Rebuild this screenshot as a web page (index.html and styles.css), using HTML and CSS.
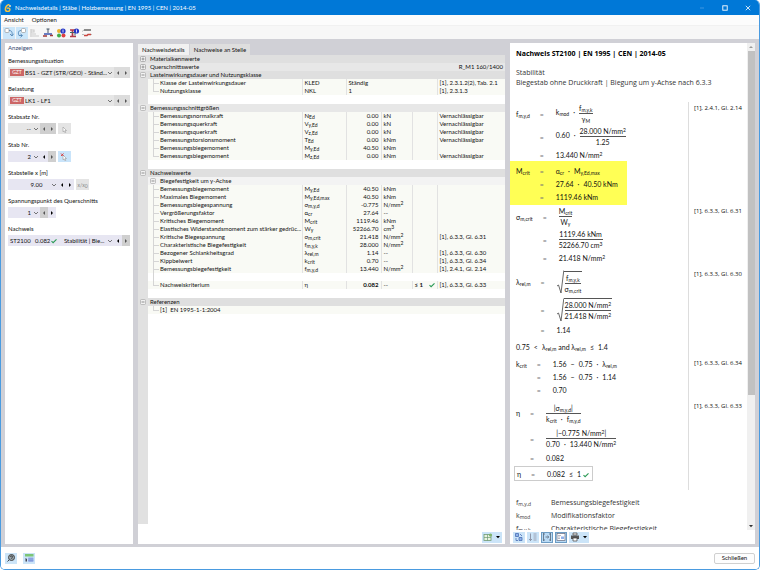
FILE: index.html
```html
<!DOCTYPE html>
<html lang="de">
<head>
	<meta charset="utf-8">
	<title>Nachweisdetails</title>
	<link rel="stylesheet" href="styles.css">
</head>
<body>

<!-- shared shapes -->
<svg class="defs" width="0" height="0">
	<symbol id="chevron" viewBox="0 0 6 6"><path d="M1 2l2 2 2-2" fill="none" stroke="#555" stroke-width=".8"/></symbol>
	<symbol id="left" viewBox="0 0 6 6"><path d="M4 1v4L2 3z"/></symbol>
	<symbol id="right" viewBox="0 0 6 6"><path d="M2 1v4l2-2z"/></symbol>
	<symbol id="down" viewBox="0 0 6 6"><path d="M1 2h4L3 4.300z"/></symbol>
	<symbol id="up" viewBox="0 0 6 6"><path d="M1 4h4L3 2z"/></symbol>
	<symbol id="check" viewBox="0 0 6 6"><path d="M.5 3.200l1.600 1.500L5.500 1.300" fill="none" stroke="#2a9a55" stroke-width="1.100"/></symbol>
	<symbol id="minus" viewBox="0 0 6 6"><rect x=".5" y=".5" width="5" height="5" rx="1" fill="#f2f2f2" stroke="#aaa" stroke-width=".7"/><path d="M1.500 3h3" stroke="#666" stroke-width=".7"/></symbol>
	<symbol id="plus" viewBox="0 0 6 6"><rect x=".5" y=".5" width="5" height="5" rx="1" fill="#f2f2f2" stroke="#999" stroke-width=".7"/><path d="M1.500 3h3M3 1.500v3" stroke="#777" stroke-width=".7"/></symbol>
	<symbol id="pick" viewBox="0 0 10 10"><path d="M4 3l3.500 3.500H6l.8 1.800-.9.400-.8-1.800L4 7.800z" fill="#fff" stroke="#999" stroke-width=".6"/></symbol>
	<symbol id="root" viewBox="0 0 7 24"><path d="M0 16l1.500-1L4 23 6.800.5" fill="none" stroke="#444" stroke-width=".8"/></symbol>
</svg>

<div class="window">
	<header class="titlebar">
		<svg class="logo" viewBox="0 0 8 8"><path d="M5.500.5C2.500 1 1 3.500 1.500 6c.4 1.800 3.500 2 4.200.4C6.500 4.500 4.500 3.200 3 4.500" fill="none" stroke="#f5c242" stroke-width="1.500"/><circle cx="6" cy="2" r="1" fill="#e8e0c0"/></svg>
		<h1>Nachweisdetails | Stäbe | Holzbemessung | EN 1995 | CEN | 2014-05</h1>
		<button class="win-btn" aria-label="Minimieren"><svg viewBox="0 0 8 8"><path d="M2 4h4" stroke="#4fa0e3" stroke-width=".8"/></svg></button>
		<button class="win-btn" aria-label="Maximieren"><svg viewBox="0 0 8 8"><rect x="1.800" y="1.800" width="4.400" height="4.400" fill="none" stroke="#fff" stroke-width=".9"/></svg></button>
		<button class="win-btn" aria-label="Fenster zu"><svg viewBox="0 0 8 8"><path d="M1.800 1.800l4.400 4.400M6.200 1.800L1.800 6.200" stroke="#fff" stroke-width=".8"/></svg></button>
	</header>

	<nav class="menubar">
		<button>Ansicht</button>
		<button>Optionen</button>
	</nav>

	<div class="toolbar">
		<button class="tool on" aria-label="Zurück"><svg viewBox="0 0 12 12"><rect x="2" y="1.500" width="4" height="4" rx="1" fill="#fff" stroke="#999" stroke-width=".7"/><path d="M6 3.500c3 0 3.500 2 3 5M7 7l2 2 1.500-2.200" fill="none" stroke="#5286b5" stroke-width=".9"/></svg></button>
		<button class="tool on" aria-label="Vor"><svg viewBox="0 0 12 12"><rect x="5.500" y="1.500" width="4" height="4" rx="1" fill="#fff" stroke="#999" stroke-width=".7"/><path d="M5 3.500c-3 0-3 3-2 5h3M4.500 7l2 1.500-2 1.800" fill="none" stroke="#5286b5" stroke-width=".9"/></svg></button>
		<button class="tool" aria-label="Liste"><svg viewBox="0 0 12 12"><path d="M2 2v8M2 3h3v2H2M3 7h4M3 9h7" fill="none" stroke="#ccc" stroke-width="1.200"/></svg></button>
		<button class="tool" aria-label="Stab"><svg viewBox="0 0 12 12"><path d="M4.500 2h3M6 2v4" stroke="#456" stroke-width="1"/><path d="M2 7h8" stroke="#3b55b0" stroke-width="1.300"/><path d="M1 9h4M8 8.500h3" fill="none" stroke="#a33a3a" stroke-width="1.400"/></svg></button>
		<button class="tool" aria-label="Ergebnisse"><svg viewBox="0 0 12 12"><circle cx="4" cy="4" r="2" fill="#e8b02e"/><circle cx="4" cy="8.500" r="2" fill="#3fae49"/><circle cx="8.500" cy="8.500" r="2" fill="#e04040"/><circle cx="8" cy="4" r="2.600" fill="#2436c8"/><path d="M8 2.500v3" stroke="#fff" stroke-width=".8"/></svg></button>
		<button class="tool" aria-label="Querschnitt"><svg viewBox="0 0 12 12"><path d="M2 3h5M4.500 3v6M2 9.500h6" stroke="#b23a48" stroke-width="1.700"/><path d="M2 5.500h5v3" fill="none" stroke="#466" stroke-width="1"/><circle cx="8.500" cy="4" r="2.600" fill="#2436c8"/><path d="M8.500 2.500v3" stroke="#fff" stroke-width=".8"/></svg></button>
		<button class="tool" aria-label="Stäbe"><svg viewBox="0 0 12 12"><path d="M3 3h7" stroke="#666" stroke-width="1.500"/><path d="M1 4.500l2-1.500M1 7.500h2M9 7.500h2" stroke="#bbb"/><path d="M3 8.500h3l1-1h3" fill="none" stroke="#c8453f" stroke-width="1.500"/></svg></button>
	</div>

	<main class="work">

		<aside class="panel side">
			<h2>Anzeigen</h2>

			<div class="field">
				<label for="situation">Bemessungssituation</label>
				<div class="control wide grey">
					<span class="pick-box"><span class="badge">GZT</span><select id="situation"><option>BS1 - GZT (STR/GEO) - Ständ...</option></select><svg><use href="#chevron"/></svg></span>
					<button class="step off" aria-label="zurück"><svg><use href="#left"/></svg></button>
					<button class="step off" aria-label="weiter"><svg><use href="#right"/></svg></button>
				</div>
			</div>

			<div class="field">
				<label for="load">Belastung</label>
				<div class="control wide grey">
					<span class="pick-box"><span class="badge">GZT</span><select id="load"><option>LK1 - LF1</option></select><svg><use href="#chevron"/></svg></span>
					<button class="step off" aria-label="zurück"><svg><use href="#left"/></svg></button>
					<button class="step off" aria-label="weiter"><svg><use href="#right"/></svg></button>
				</div>
			</div>

			<div class="field">
				<label for="set">Stabsatz Nr.</label>
				<div class="control grey">
					<span class="pick-box small"><select id="set"><option>--</option></select><svg><use href="#chevron"/></svg></span>
					<button class="step off" aria-label="zurück"><svg><use href="#left"/></svg></button>
					<button class="step off" aria-label="weiter"><svg><use href="#right"/></svg></button>
					<button class="pick" aria-label="Stabsatz wählen"><svg><use href="#pick"/></svg></button>
				</div>
			</div>

			<div class="field">
				<label for="member">Stab Nr.</label>
				<div class="control">
					<span class="pick-box small"><select id="member"><option>2</option></select><svg><use href="#chevron"/></svg></span>
					<button class="step" aria-label="zurück"><svg><use href="#left"/></svg></button>
					<button class="step off" aria-label="weiter"><svg><use href="#right"/></svg></button>
					<button class="pick on" aria-label="Stab wählen"><svg viewBox="0 0 10 10"><use href="#pick"/><path d="M2 1.500l2.500 2.500M4.500 1.500L2 4" stroke="#d33" stroke-width=".9"/></svg></button>
				</div>
			</div>

			<div class="field">
				<label for="place">Stabstelle x [m]</label>
				<div class="control">
					<span class="pick-box medium"><select id="place"><option>9.00</option></select><svg><use href="#chevron"/></svg></span>
					<button class="step" aria-label="zurück"><svg><use href="#left"/></svg></button>
					<button class="step" aria-label="weiter"><svg><use href="#right"/></svg></button>
					<button class="pick">x/x<sub>0</sub></button>
				</div>
			</div>

			<div class="field">
				<label for="point">Spannungspunkt des Querschnitts</label>
				<div class="control">
					<span class="pick-box small"><select id="point"><option>1</option></select><svg><use href="#chevron"/></svg></span>
					<button class="step off" aria-label="zurück"><svg><use href="#left"/></svg></button>
					<button class="step" aria-label="weiter"><svg><use href="#right"/></svg></button>
				</div>
			</div>

			<div class="field">
				<label for="proof">Nachweis</label>
				<div class="control wide">
					<span class="pick-box"><span class="proof-no">ST2100</span><span class="proof-val">0.082</span><svg><use href="#check"/></svg><select id="proof"><option>Stabilität | Bie...</option></select><svg><use href="#chevron"/></svg></span>
					<button class="step" aria-label="zurück"><svg><use href="#left"/></svg></button>
					<button class="step off" aria-label="weiter"><svg><use href="#right"/></svg></button>
				</div>
			</div>
		</aside>

		<section class="details">
			<div class="tabs">
				<button class="tab active">Nachweisdetails</button>
				<button class="tab">Nachweise an Stelle</button>
			</div>
			<div class="panel grid-panel">
				<div class="grid-scroll">
				<table>
					<colgroup><col class="c-tree"><col class="c-name"><col class="c-sym"><col class="c-val"><col class="c-unit"><col class="c-lim"><col class="c-ref"></colgroup>
					<tbody>
					<tr class="group"><th><svg><use href="#plus"/></svg></th><th colspan="6">Materialkennwerte</th></tr>
					<tr class="group light"><th><svg><use href="#plus"/></svg></th><th colspan="4">Querschnittswerte</th><td colspan="2" class="num">R_M1 160/1400</td></tr>
					<tr class="group"><th><svg><use href="#minus"/></svg></th><th colspan="6">Lasteinwirkungsdauer und Nutzungsklasse</th></tr>
					<tr><td></td><td>Klasse der Lasteinwirkungsdauer</td><td>KLED</td><td colspan="3">Ständig</td><td>[1], 2.3.1.2(2), Tab. 2.1</td></tr>
					<tr class="last"><td></td><td>Nutzungsklasse</td><td>NKL</td><td colspan="3">1</td><td>[1], 2.3.1.3</td></tr>
					<tr class="gap"><td></td><td colspan="6"></td></tr>

					<tr class="group light"><th><svg><use href="#minus"/></svg></th><th colspan="6">Bemessungsschnittgrößen</th></tr>
					<tr><td></td><td>Bemessungsnormalkraft</td><td>N<sub>Ed</sub></td><td class="num">0.00</td><td>kN</td><td></td><td>Vernachlässigbar</td></tr>
					<tr><td></td><td>Bemessungsquerkraft</td><td>V<sub>y,Ed</sub></td><td class="num">0.00</td><td>kN</td><td></td><td>Vernachlässigbar</td></tr>
					<tr><td></td><td>Bemessungsquerkraft</td><td>V<sub>z,Ed</sub></td><td class="num">0.00</td><td>kN</td><td></td><td>Vernachlässigbar</td></tr>
					<tr><td></td><td>Bemessungstorsionsmoment</td><td>T<sub>Ed</sub></td><td class="num">0.00</td><td>kNm</td><td></td><td>Vernachlässigbar</td></tr>
					<tr><td></td><td>Bemessungsbiegemoment</td><td>M<sub>y,Ed</sub></td><td class="num">40.50</td><td>kNm</td><td></td><td></td></tr>
					<tr class="last"><td></td><td>Bemessungsbiegemoment</td><td>M<sub>z,Ed</sub></td><td class="num">0.00</td><td>kNm</td><td></td><td>Vernachlässigbar</td></tr>
					<tr class="gap"><td></td><td colspan="6"></td></tr>

					<tr class="group"><th><svg><use href="#minus"/></svg></th><th colspan="6">Nachweiswerte</th></tr>
					<tr class="subgroup"><td></td><th colspan="6"><svg><use href="#minus"/></svg>Biegefestigkeit um y-Achse</th></tr>
					<tr><td></td><td>Bemessungsbiegemoment</td><td>M<sub>y,Ed</sub></td><td class="num">40.50</td><td>kNm</td><td></td><td></td></tr>
					<tr><td></td><td>Maximales Biegemoment</td><td>M<sub>y,Ed,max</sub></td><td class="num">40.50</td><td>kNm</td><td></td><td></td></tr>
					<tr><td></td><td>Bemessungsbiegespannung</td><td>σ<sub>m,y,d</sub></td><td class="num">-0.775</td><td>N/mm<sup>2</sup></td><td></td><td></td></tr>
					<tr><td></td><td>Vergrößerungsfaktor</td><td>α<sub>cr</sub></td><td class="num">27.64</td><td>--</td><td></td><td></td></tr>
					<tr><td></td><td>Kritisches Biegemoment</td><td>M<sub>crit</sub></td><td class="num">1119.46</td><td>kNm</td><td></td><td></td></tr>
					<tr><td></td><td>Elastisches Widerstandsmoment zum stärker gedrüc...</td><td>W<sub>y</sub></td><td class="num">52266.70</td><td>cm<sup>3</sup></td><td></td><td></td></tr>
					<tr><td></td><td>Kritische Biegespannung</td><td>σ<sub>m,crit</sub></td><td class="num">21.418</td><td>N/mm<sup>2</sup></td><td></td><td>[1], 6.3.3, Gl. 6.31</td></tr>
					<tr><td></td><td>Charakteristische Biegefestigkeit</td><td>f<sub>m,y,k</sub></td><td class="num">28.000</td><td>N/mm<sup>2</sup></td><td></td><td></td></tr>
					<tr><td></td><td>Bezogener Schlankheitsgrad</td><td>λ<sub>rel,m</sub></td><td class="num">1.14</td><td>--</td><td></td><td>[1], 6.3.3, Gl. 6.30</td></tr>
					<tr><td></td><td>Kippbeiwert</td><td>k<sub>crit</sub></td><td class="num">0.70</td><td>--</td><td></td><td>[1], 6.3.3, Gl. 6.34</td></tr>
					<tr><td></td><td>Bemessungsbiegefestigkeit</td><td>f<sub>m,y,d</sub></td><td class="num">13.440</td><td>N/mm<sup>2</sup></td><td></td><td>[1], 2.4.1, Gl. 2.14</td></tr>
					<tr class="gap line"><td></td><td colspan="6"></td></tr>
					<tr class="last"><td></td><td>Nachweiskriterium</td><td>η</td><td class="num strong">0.082</td><td>--</td><td class="limit"><b>≤ 1</b><svg><use href="#check"/></svg></td><td>[1], 6.3.3, Gl. 6.33</td></tr>
					<tr class="gap"><td></td><td colspan="6"></td></tr>

					<tr class="group"><th><svg><use href="#minus"/></svg></th><th colspan="6">Referenzen</th></tr>
					<tr class="last"><td></td><td colspan="6">[1]&nbsp; EN 1995-1-1:2004</td></tr>
					</tbody>
				</table>
				</div>
				<div class="panel-tools end">
					<button class="ptool drop" aria-label="Tabelle exportieren"><svg viewBox="0 0 10 10"><rect x="1" y="2.500" width="7" height="6" fill="#e9f3e2" stroke="#6f9a72" stroke-width=".8"/><path d="M1 5.500h7M4.500 2.500v6" stroke="#6f9a72" stroke-width=".7"/><circle cx="7.500" cy="3" r="1.600" fill="#7fb56a"/></svg><svg class="caret"><use href="#down"/></svg></button>
				</div>
			</div>
		</section>

		<section class="panel report">
			<div class="report-view">
				<div class="doc">
					<h2>Nachweis ST2100 | EN 1995 | CEN | 2014-05</h2>
					<p class="intro">Stabilität<br>Biegestab ohne Druckkraft | Biegung um y-Achse nach 6.3.3</p>

					<div class="calc">
						<div class="step-row">
							<div class="eqs fracs">
								<span>f<sub>m,y,d</sub></span><i>=</i><span class="rhs">k<sub>mod</sub><em>·</em><span class="frac"><span>f<sub>m,y,k</sub></span><span>γ<sub>M</sub></span></span></span>
								<span></span><i>=</i><span class="rhs">0.60<em>·</em><span class="frac"><span>28.000 N/mm<sup>2</sup></span><span>1.25</span></span></span>
								<span></span><i>=</i><span class="rhs">13.440 N/mm<sup>2</sup></span>
							</div>
							<div class="cite">[1], 2.4.1, Gl. 2.14</div>
						</div>

						<div class="step-row">
							<div class="mark-cell">
								<div class="eqs lines mark">
									<span>M<sub>crit</sub></span><i>=</i><span class="rhs">α<sub>cr</sub><em>·</em>M<sub>y,Ed,max</sub></span>
									<span></span><i>=</i><span class="rhs">27.64<em>·</em>40.50 kNm</span>
									<span></span><i>=</i><span class="rhs">1119.46 kNm</span>
								</div>
							</div>
							<div class="cite"></div>
						</div>

						<div class="step-row">
							<div class="eqs fracs">
								<span>σ<sub>m,crit</sub></span><i>=</i><span class="rhs"><span class="frac"><span>M<sub>crit</sub></span><span>W<sub>y</sub></span></span></span>
								<span></span><i>=</i><span class="rhs"><span class="frac"><span>1119.46 kNm</span><span>52266.70 cm<sup>3</sup></span></span></span>
								<span></span><i>=</i><span class="rhs">21.418 N/mm<sup>2</sup></span>
							</div>
							<div class="cite">[1], 6.3.3, Gl. 6.31</div>
						</div>

						<div class="step-row spaced">
							<div class="eqs roots">
								<span>λ<sub>rel,m</sub></span><i>=</i><span class="rhs"><svg class="root"><use href="#root"/></svg><span class="under"><span class="frac"><span>f<sub>m,y,k</sub></span><span>σ<sub>m,crit</sub></span></span></span></span>
								<span></span><i>=</i><span class="rhs"><svg class="root"><use href="#root"/></svg><span class="under"><span class="frac"><span>28.000 N/mm<sup>2</sup></span><span>21.418 N/mm<sup>2</sup></span></span></span></span>
								<span></span><i>=</i><span class="rhs">1.14</span>
							</div>
							<div class="cite">[1], 6.3.3, Gl. 6.30</div>
						</div>

						<div class="step-row spaced">
							<div class="eqs cond"><span>0.75<em>&lt;</em>λ<sub>rel,m</sub> and λ<sub>rel,m</sub><em>≤</em>1.4</span></div>
							<div class="cite"></div>
						</div>

						<div class="step-row spaced">
							<div class="eqs lines">
								<span>k<sub>crit</sub></span><i>=</i><span class="rhs">1.56<em>−</em>0.75<em>·</em>λ<sub>rel,m</sub></span>
								<span></span><i>=</i><span class="rhs">1.56<em>−</em>0.75<em>·</em>1.14</span>
								<span></span><i>=</i><span class="rhs">0.70</span>
							</div>
							<div class="cite">[1], 6.3.3, Gl. 6.34</div>
						</div>

						<div class="step-row spaced">
							<div class="eqs fracs tall">
								<span>η</span><i>=</i><span class="rhs"><span class="frac"><span>|σ<sub>m,y,d</sub>|</span><span>k<sub>crit</sub><em>·</em>f<sub>m,y,d</sub></span></span></span>
								<span></span><i>=</i><span class="rhs"><span class="frac"><span>|−0.775 N/mm<sup>2</sup>|</span><span>0.70<em>·</em>13.440 N/mm<sup>2</sup></span></span></span>
								<span></span><i>=</i><span class="rhs">0.082</span>
							</div>
							<div class="cite">[1], 6.3.3, Gl. 6.33</div>
						</div>

						<div class="step-row final">
							<div class="result-cell">
								<div class="eqs lines result">
									<span>η</span><i>=</i><span class="rhs">0.082<em>≤</em>1&nbsp;<svg><use href="#check"/></svg></span>
								</div>
							</div>
							<div class="cite"></div>
						</div>
					</div>

					<dl class="legend">
						<dt>f<sub>m,y,d</sub></dt><dd>Bemessungsbiegefestigkeit</dd>
						<dt>k<sub>mod</sub></dt><dd>Modifikationsfaktor</dd>
						<dt>f<sub>m,y,k</sub></dt><dd>Charakteristische Biegefestigkeit</dd>
					</dl>
				</div>
				<div class="scrollbar">
					<svg><use href="#up"/></svg>
					<div class="track"><div class="thumb"></div></div>
					<svg class="dark"><use href="#down"/></svg>
				</div>
			</div>
			<div class="panel-tools">
				<button class="ptool" aria-label="Werte"><svg viewBox="0 0 10 10"><path d="M1.500 1.500h3v3h-3zM5 5.500h3v3H5z" fill="#8fb2ea" stroke="#4a6fb5" stroke-width=".8"/><path d="M6 2l2 2M2 6v2.500h2" fill="none" stroke="#4a6fb5" stroke-width=".8"/></svg></button>
				<button class="ptool" aria-label="Abstand"><svg viewBox="0 0 10 10"><path d="M2.500 1.500v7M1 7l1.500 1.500L4 7" fill="none" stroke="#778" stroke-width=".7"/><path d="M5.500 2h3M5.500 4h3M5.500 6h3M5.500 8h3" stroke="#889" stroke-width=".7"/></svg></button>
				<button class="ptool on" aria-label="Breite"><svg viewBox="0 0 10 10"><path d="M1.500 1v8M8.500 1v8M1.500 2h1.500M1.500 8h1.500M7 2h1.500M7 8h1.500M3.500 5h3M5.500 3.800L6.800 5 5.500 6.200" fill="none" stroke="#567" stroke-width=".8"/></svg></button>
				<button class="ptool on" aria-label="Legende"><svg viewBox="0 0 10 10"><rect x="1" y="1.500" width="8" height="7" fill="#fff" stroke="#667" stroke-width=".7"/><path d="M2 3.500h3M2 5h2M2 6.500h2" stroke="#99a" stroke-width=".7"/><rect x="5" y="4.500" width="3" height="2.500" fill="#8fb0ea"/></svg></button>
				<button class="ptool drop" aria-label="Drucken"><svg viewBox="0 0 10 10"><path d="M3 1h4v2H3z" fill="#eee" stroke="#444" stroke-width=".7"/><rect x="1" y="3.500" width="8" height="3.500" fill="#555"/><path d="M3 6h4v3H3z" fill="#fff" stroke="#444" stroke-width=".7"/></svg><svg class="caret"><use href="#down"/></svg></button>
			</div>
		</section>
	</main>

	<footer class="bottom">
		<button class="ptool" aria-label="Hilfe"><svg viewBox="0 0 10 10"><circle cx="5.500" cy="4.500" r="3" fill="#9aa7ae" stroke="#444" stroke-width="1"/><path d="M4.500 4c0-1.500 2-1.500 2 0 0 .8-1 .8-1 1.800M3 7L1.500 8.500" fill="none" stroke="#333" stroke-width=".9"/></svg></button>
		<button class="ptool" aria-label="Einheiten"><svg viewBox="0 0 10 10"><rect x="1" y="1" width="8.500" height="2.500" fill="#7cc576"/><path d="M1.500 5v3.500h1.500V6z" fill="#445"/><rect x="4" y="4.500" width="5.500" height="4.500" fill="#a9bff0"/><path d="M4 6h5.500M4 7.500h5.500M6 4.500V9M8 4.500V9" stroke="#6a86cf" stroke-width=".5"/></svg></button>
		<button class="close">Schließen</button>
	</footer>
</div>

</body>
</html>
```

FILE: styles.css
```css
* {
	box-sizing: border-box;
	margin: 0;
	padding: 0;
}

body {
	height: 100vh;
	font-family: Lato, "Open Sans", sans-serif;
	font-size: 6px;
	line-height: 8px;
	color: #111;
	background: #fff;
	overflow: hidden;
}

button, select {
	font: inherit;
	color: inherit;
	border: 0;
	background: none;
}

svg {
	display: block;
	flex: none;
	width: 6px;
	height: 6px;
}

.defs {
	position: absolute;
}

sub, sup {
	font-size: 5px;
	line-height: 0;
}

sub {
	vertical-align: -1px;
}

sup {
	vertical-align: 2px;
}

.window {
	display: flex;
	flex-direction: column;
	height: 100vh;
	border: 1px solid #4a9be0;
	border-top: 0;
	border-radius: 5px;
	overflow: hidden;
}

/* title bar */
.titlebar {
	display: flex;
	align-items: center;
	height: 15px;
	padding-left: 3px;
	background: #0078d7;
	color: #fff;
}

.titlebar h1 {
	flex: 1;
	margin-left: 3px;
	font-size: 6px;
	font-weight: 400;
}

.logo {
	width: 8px;
	height: 8px;
}

.win-btn {
	display: flex;
	justify-content: center;
	width: 23px;
}

.win-btn svg {
	width: 8px;
	height: 8px;
}

.menubar {
	display: flex;
	gap: 8px;
	height: 11px;
	padding: 1px 3px;
	background: #fcfcfc;
	border-bottom: 1px solid #f1f1f1;
}

.toolbar {
	display: flex;
	align-items: center;
	gap: 1px;
	height: 13px;
	padding-left: 2px;
	background: #f7f7f7;
}

.tool {
	width: 12px;
	height: 12px;
}

.tool.on {
	background: #cbe6fa;
}

.tool svg {
	width: 12px;
	height: 12px;
}

/* work area */
.work {
	flex: 1;
	display: flex;
	gap: 5px;
	min-height: 0;
	padding: 4px 4px 3px;
	background: #d0d0d6;
}

.panel {
	background: #fff;
}

.side {
	width: 128px;
	padding: 1px 3px;
}

.side h2 {
	font-size: 6px;
	font-weight: 400;
	color: #35466e;
	margin-bottom: 5px;
}

.field {
	margin-bottom: 7px;
}

.field label {
	display: block;
	margin-bottom: 2px;
}

.control {
	display: flex;
	height: 11px;
}

.pick-box {
	display: flex;
	align-items: center;
	flex: 1;
	min-width: 0;
	padding: 0 1px 0 2px;
	background: #e7e6f2;
}

.pick-box.small,
.pick-box.medium {
	flex: none;
	width: 32px;
}

.pick-box.medium {
	width: 50px;
}

.pick-box select {
	appearance: none;
	flex: 1;
	min-width: 0;
}

.small select {
	text-align: right;
	text-align-last: right;
	padding-right: 2px;
}

.medium select {
	text-align: center;
	text-align-last: center;
	padding-left: 12px;
}

.grey .pick-box {
	background: #e6e6e6;
}

.badge {
	width: 14px;
	margin-right: 1px;
	line-height: 7px;
	text-align: center;
	color: #fff;
	background: #cc6666;
	font-size: 5px;
}

.proof-no {
	width: 25px;
}

.proof-val {
	width: 16px;
}

.pick-box svg + select {
	margin-left: 7px;
}

.step {
	display: flex;
	align-items: center;
	justify-content: center;
	width: 8px;
	background: #e7e6f2;
}

.step.off {
	background: #cfcfcf;
}

.wide.grey .step {
	background: #dcdcdc;
}

.step.off svg {
	fill: #555;
}

.pick {
	width: 13px;
	margin-left: 2px;
	background: #e4e4e4;
	color: #888;
	font-size: 5px;
}

.pick.on {
	background: #c9e4fa;
}

.pick svg {
	width: 12px;
	height: 10px;
}

/* detail table */
.details {
	display: flex;
	flex-direction: column;
	flex: 1;
	min-width: 0;
}

.tabs {
	display: flex;
	gap: 1px;
	padding-top: 1px;
}

.tab {
	height: 11px;
	padding: 0 4px;
	background: #dedede;
}

.tab.active {
	background: #f1f1f1;
}

.grid-panel {
	flex: 1;
	display: flex;
	flex-direction: column;
	min-height: 0;
}

.grid-scroll {
	flex: 1;
	margin-bottom: 6px;
	overflow: hidden;
	background: linear-gradient(to right, #e1e1e1 10px, #fff 10px);
}

table {
	width: 100%;
	table-layout: fixed;
	border-collapse: collapse;
}

.c-tree { width: 10px; }
.c-sym { width: 44px; }
.c-val { width: 35px; }
.c-unit { width: 31px; }
.c-lim { width: 25px; }
.c-ref { width: 68px; }

th, td {
	height: 8px;
	line-height: 8px;
	padding: 0 2px;
	font-weight: 400;
	text-align: left;
	white-space: nowrap;
	overflow: hidden;
}

td {
	background: #f9faf5;
}

td + td + td {
	border-left: 1px solid #e2e2e2;
}

tr > :first-child {
	padding: 0 2px;
	background: #e1e1e1;
}

/* tree lines in front of the names */
td:nth-child(2) {
	padding: 0 0 0 12px;
	background: linear-gradient(#d5d5d5, #d5d5d5) 5px 4px / 6px 1px no-repeat,
		linear-gradient(#d5d5d5, #d5d5d5) 5px 0 / 1px 100% no-repeat, #f9faf5;
}

.last td:nth-child(2) {
	background: linear-gradient(#d5d5d5, #d5d5d5) 5px 4px / 6px 1px no-repeat,
		linear-gradient(#d5d5d5, #d5d5d5) 5px 0 / 1px 5px no-repeat, #f9faf5;
}

.gap td {
	height: 9px;
}

.gap.line td {
	height: 8px;
}

.gap td:nth-child(2) {
	background: #fff;
}

.gap.line td:nth-child(2) {
	background: linear-gradient(#d5d5d5, #d5d5d5) 5px 0 / 1px 100% no-repeat, #fff;
}

.group > * {
	background: #dfdfdf;
	border: 0;
}

.group.light > * {
	background: #e7e7e7;
}

.subgroup th {
	background: #f3f3f3;
}

.subgroup svg {
	display: inline-block;
	vertical-align: middle;
	margin-right: 4px;
}

.num {
	text-align: right;
}

.strong {
	font-weight: 700;
}

.limit svg {
	float: right;
	margin-top: 1px;
}

.panel-tools {
	display: flex;
	align-items: center;
	gap: 2px;
	height: 14px;
	padding: 0 3px;
}

.panel-tools.end {
	justify-content: flex-end;
}

.ptool {
	display: flex;
	align-items: center;
	justify-content: center;
	width: 12px;
	height: 11px;
	background: #cbe4f8;
}

.ptool.on {
	border: 1px solid #6c9cc4;
	background: #b9daf5;
}

.ptool.drop {
	width: 20px;
}

.ptool svg {
	width: 10px;
	height: 10px;
}

.ptool .caret {
	width: 6px;
	height: 6px;
	margin-left: 2px;
}

/* report */
.report {
	width: 245px;
	display: flex;
	flex-direction: column;
}

.report-view {
	flex: 1;
	display: flex;
	min-height: 0;
}

.doc {
	flex: 1;
	overflow: hidden;
	font-family: "Open Sans", "Noto Sans", sans-serif;
	font-size: 7px;
	line-height: 10px;
}

.doc h2 {
	padding: 6px 6px 9px;
	font-size: 7px;
	font-weight: 700;
	color: #000;
}

.intro {
	padding: 0 6px 14px;
	color: #333;
}

.calc {
	font-family: Lato, "Open Sans", sans-serif;
	color: #111;
}

.step-row {
	display: grid;
	grid-template-columns: 1fr 59px;
}

.cite {
	padding-left: 5px;
	border-left: 1px solid #ddd;
	font-family: "Open Sans", "Noto Sans", sans-serif;
	font-size: 6px;
	line-height: 13px;
	white-space: nowrap;
}

.eqs {
	display: grid;
	grid-template-columns: auto 6px 1fr;
	column-gap: 10px;
	align-items: center;
	padding-left: 6px;
	line-height: 10px;
	white-space: nowrap;
}

.eqs i {
	font-style: normal;
	color: #777;
}

.eqs em {
	font-style: normal;
	margin: 0 4px;
}

.fracs {
	grid-template-rows: 23px 23px 13px;
}

.fracs.tall {
	grid-template-rows: 26px 25px 13px;
}

.lines {
	grid-auto-rows: 13px;
}

.roots {
	grid-template-rows: 28px 27px 13px;
}

.eqs.cond {
	grid-template-columns: 1fr;
	grid-auto-rows: 13px;
}

.spaced .eqs {
	padding-top: 4px;
}

.spaced .cite {
	padding-top: 4px;
}

.rhs svg,
.under {
	display: inline-block;
	vertical-align: middle;
}

.frac {
	display: inline-flex;
	flex-direction: column;
	text-align: center;
	vertical-align: middle;
}

.frac > span:first-child {
	border-bottom: 1px solid #555;
}

.rhs .root {
	width: 7px;
	height: 24px;
}

.under {
	border-top: 1px solid #555;
	padding: 1px 1px 0;
}

.mark {
	width: 66%;
	padding-top: 3px;
	padding-bottom: 2px;
	background: #ffff55;
}

.final .result-cell {
	padding: 2px 0 9px 4px;
}

.result {
	display: inline-grid;
	padding: 0 3px 0 2px;
	border: 1px solid #ccc;
}

.legend {
	display: grid;
	grid-template-columns: 35px 1fr;
	grid-auto-rows: 13px;
	align-items: center;
	padding: 6px 6px 0;
	color: #333;
}

.scrollbar {
	display: flex;
	flex-direction: column;
	align-items: center;
	width: 8px;
	background: #f0f0f0;
	fill: #999;
}

.scrollbar svg {
	margin: 1px 0;
}

.scrollbar .dark {
	fill: #333;
}

.track {
	flex: 1;
	width: 7px;
}

.thumb {
	height: 73%;
	background: #c1c1c1;
}

.bottom {
	display: flex;
	align-items: center;
	gap: 6px;
	height: 22px;
	padding: 0 4px;
	background: #fff;
}

.close {
	margin-left: auto;
	width: 41px;
	height: 11px;
	border: 1px solid #d0d0d0;
	border-radius: 2px;
	background: #fdfdfd;
}
```
